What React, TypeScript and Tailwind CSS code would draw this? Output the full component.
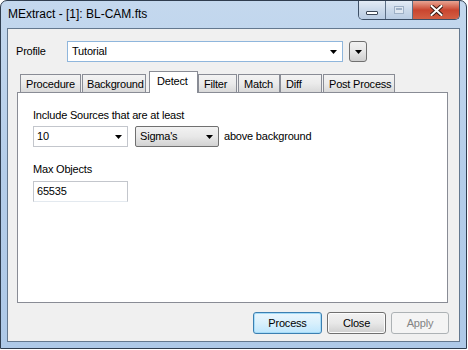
import React from 'react';

function Arrow({ className = '' }: { className?: string }) {
  return (
    <svg width="7" height="4" viewBox="0 0 7 4" className={className}>
      <path d="M0 0 H7 L3.5 4 Z" fill="#000" />
    </svg>
  );
}

function TitleButtons() {
  return (
    <div className="absolute right-[6px] top-0 flex h-[19px] overflow-hidden rounded-b-[5px] border border-t-0 border-[#3d4f66]">
      <div className="flex w-[27px] items-center justify-center border-r border-[#5d6f86] bg-gradient-to-b from-[#e3ebf5] via-[#cbd9ea] to-[#b9cce3]">
        <div className="mt-[5px] h-[4px] w-[12px] rounded-[1px] border border-[#3b4656] bg-white" />
      </div>
      <div className="flex w-[27px] items-center justify-center border-r border-[#5d6f86] bg-gradient-to-b from-[#e3ebf5] via-[#cbd9ea] to-[#b9cce3]">
        <div className="h-[8px] w-[10px] border border-[#9eb0c6] bg-[#dfe7f1] p-[1px]">
          <div className="h-full w-full border-t-2 border-[#9eb0c6]" />
        </div>
      </div>
      <div className="flex w-[46px] items-center justify-center bg-gradient-to-b from-[#e8a493] via-[#c9452f] to-[#d35f44]">
        <svg width="13" height="11" viewBox="0 0 13 11">
          <path d="M1.5 1 L11.5 10 M11.5 1 L1.5 10" stroke="#3a1a12" strokeWidth="4" strokeLinecap="square" />
          <path d="M1.5 1 L11.5 10 M11.5 1 L1.5 10" stroke="#fff" strokeWidth="2" strokeLinecap="square" />
        </svg>
      </div>
    </div>
  );
}

const tabs = [
  { name: 'Procedure', w: 'w-[61px]', ml: 'ml-[3px]', pl: 'pl-[5px]' },
  { name: 'Background', w: 'w-[64px]', ml: 'ml-[1px]', pl: 'pl-[4px]' },
  { name: 'Detect', w: 'w-[49px]', ml: 'ml-[3px]', pl: 'pl-[7px]', active: true },
  { name: 'Filter', w: 'w-[39px]', ml: 'ml-0', pl: 'pl-[5px]' },
  { name: 'Match', w: 'w-[42px]', ml: 'ml-[1px]', pl: 'pl-[5px]' },
  { name: 'Diff', w: 'w-[42px]', ml: 'ml-0', pl: 'pl-[5px]' },
  { name: 'Post Process', w: 'w-[72px]', ml: 'ml-[1px]', pl: 'pl-[5px]' },
];

export default function App() {
  return (
    <div className="relative h-[350px] w-[468px] bg-white text-[11px] leading-[13px] tracking-[-0.2px] text-black" style={{ fontFamily: '"Liberation Sans", Arial, sans-serif' }}>
      <div className="relative flex h-[349px] w-[467px] flex-col rounded-t-[7px] border border-[#2f3d4f] bg-gradient-to-b from-[#c4d8ee] via-[#b4cde9] to-[#aec9e8] px-[6px] pb-[6px]">
        <div className="flex h-[27px] items-center pl-[1px] text-[12px] tracking-normal">MExtract - [1]: BL-CAM.fts</div>
        <TitleButtons />

        <div className="flex flex-1 flex-col border border-[#64788f] bg-[#f0f0f0]">
          <div className="mt-[12px] flex h-[21px] items-center">
            <div className="w-[59px] pl-[8px]">Profile</div>
            <div className="flex h-[21px] w-[276px] items-center justify-between border border-[#8fb6dc] bg-white pl-[4px] pr-[5px]">
              <span>Tutorial</span>
              <Arrow />
            </div>
            <div className="ml-[6px] flex h-[21px] w-[18px] items-center justify-center rounded-[3px] border border-[#707070] bg-gradient-to-b from-[#f2f2f2] via-[#e6e6e6] to-[#cfcfcf]">
              <Arrow />
            </div>
          </div>

          <div className="ml-[9px] mt-[9px] w-[431px]">
            <div className="flex h-[21px] items-end">
              {tabs.map(t =>
                t.active ? (
                  <div key={t.name} className={`${t.w} ${t.ml} ${t.pl} relative z-10 -mb-px flex h-[22px] items-start border border-b-0 border-[#898c95] bg-white pt-[3px]`}>
                    {t.name}
                  </div>
                ) : (
                  <div key={t.name} className={`${t.w} ${t.ml} ${t.pl} flex h-[18px] items-center border border-b-0 border-[#898c95] bg-gradient-to-b from-[#f3f3f3] via-[#ebebeb] to-[#d9d9d9] pt-[1px]`}>
                    {t.name}
                  </div>
                )
              )}
            </div>
            <div className="h-[211px] border border-[#898c95] bg-white pl-[15px] pt-[16px]">
              <div>Include Sources that are at least</div>
              <div className="mt-[4px] flex items-center">
                <div className="flex h-[21px] w-[95px] items-center justify-between border border-[#c3c6cc] bg-white pl-[3px] pr-[5px]">
                  <span>10</span>
                  <Arrow />
                </div>
                <div className="ml-[7px] flex h-[21px] w-[84px] items-center justify-between rounded-[2px] border border-[#707070] bg-gradient-to-b from-[#f2f2f2] via-[#e8e8e8] to-[#d2d2d2] pl-[4px] pr-[5px]">
                  <span>Sigma's</span>
                  <Arrow />
                </div>
                <span className="ml-[5px]">above background</span>
              </div>
              <div className="mt-[16px]">Max Objects</div>
              <div className="mt-[5px] flex h-[21px] w-[95px] items-center border border-[#c3c6cc] border-b-[#e3e9ef] bg-white pl-[3px]">65535</div>
            </div>
          </div>

          <div className="mr-[10px] mt-[9px] flex justify-end gap-[5px]">
            <div className="flex h-[22px] w-[69px] items-center justify-center rounded-[3px] border border-[#3c7fb1] bg-gradient-to-b from-[#eaf6fd] via-[#d9f0fc] to-[#bee6fd] shadow-[inset_0_0_0_1px_#a6dcf8]">Process</div>
            <div className="flex h-[22px] w-[59px] items-center justify-center rounded-[3px] border border-[#707070] bg-gradient-to-b from-[#f2f2f2] via-[#e8e8e8] to-[#cfcfcf] shadow-[inset_0_0_0_1px_#fcfcfc]">Close</div>
            <div className="flex h-[22px] w-[58px] items-center justify-center rounded-[3px] border border-[#adb2b5] bg-[#f4f4f4] text-[#838383]">Apply</div>
          </div>
        </div>
      </div>
    </div>
  );
}
